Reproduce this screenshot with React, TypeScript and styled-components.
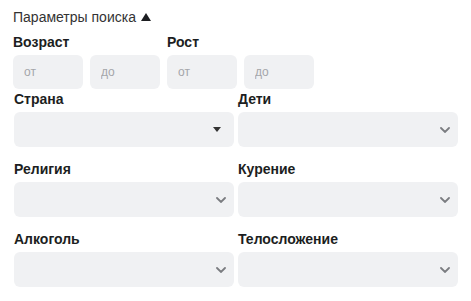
import * as React from 'react';
import styled, {createGlobalStyle} from 'styled-components';

const GlobalStyle = createGlobalStyle`
  body {
    margin: 0;
    background: #ffffff;
    font-family: "Liberation Sans", Arial, sans-serif;
  }
`;

const Page = styled.div`
  padding: 8px 13px 0 13px;
  width: 446px;
  box-sizing: border-box;
`;

const Toggle = styled.div`
  display: flex;
  align-items: center;
  gap: 5px;
  font-size: 14px;
  line-height: 18px;
  color: #333333;
`;

const UpTriangle = styled.span`
  width: 0;
  height: 0;
  border-left: 5px solid transparent;
  border-right: 5px solid transparent;
  border-bottom: 8px solid #1c1e21;
  margin-top: -1px;
`;

const RangeRow = styled.div`
  display: flex;
  gap: 7px;
  margin-top: 8px;
`;

const RangeGroup = styled.div`
  display: flex;
  flex-direction: column;
`;

const Label = styled.div`
  font-size: 14px;
  font-weight: 700;
  line-height: 17px;
  color: #1c1e21;
  margin-bottom: 4px;
`;

const RangeInputs = styled.div`
  display: flex;
  gap: 7px;
`;

const NumInput = styled.input`
  width: 70px;
  height: 34px;
  box-sizing: border-box;
  border: none;
  border-radius: 6px;
  background: #f0f1f3;
  padding: 0 11px;
  font-family: inherit;
  font-size: 12px;
  outline: none;
  &::placeholder {
    color: #a4a6aa;
  }
`;

const FieldGrid = styled.div`
  display: grid;
  grid-template-columns: 220px 220px;
  column-gap: 4px;
  row-gap: 14px;
  margin-top: 2px;
  padding-left: 1px;
`;

const Field = styled.div`
  display: flex;
  flex-direction: column;
`;

const SelectBox = styled.div`
  height: 35px;
  border-radius: 6px;
  background: #f0f1f3;
  display: flex;
  align-items: center;
  justify-content: flex-end;
  padding-right: 13px;
  box-sizing: border-box;
`;

const Caret = styled.span`
  width: 0;
  height: 0;
  border-left: 4px solid transparent;
  border-right: 4px solid transparent;
  border-top: 5px solid #333333;
`;

function Chevron() {
  return (
    <svg width="10" height="6" viewBox="0 0 10 6" style={{marginRight: -5}}>
      <path d="M1 1 L5 5 L9 1" fill="none" stroke="#7a7c80" strokeWidth="1.8" strokeLinecap="round"/>
    </svg>
  );
}

const fields: { label: string; kind: 'caret' | 'chevron' }[] = [
  {label: 'Страна', kind: 'caret'},
  {label: 'Дети', kind: 'chevron'},
  {label: 'Религия', kind: 'chevron'},
  {label: 'Курение', kind: 'chevron'},
  {label: 'Алкоголь', kind: 'chevron'},
  {label: 'Телосложение', kind: 'chevron'},
];

export default function App() {
  return (
    <Page>
      <GlobalStyle/>
      <Toggle>Параметры поиска <UpTriangle/></Toggle>
      <RangeRow>
        <RangeGroup>
          <Label>Возраст</Label>
          <RangeInputs>
            <NumInput placeholder="от"/>
            <NumInput placeholder="до"/>
          </RangeInputs>
        </RangeGroup>
        <RangeGroup>
          <Label>Рост</Label>
          <RangeInputs>
            <NumInput placeholder="от"/>
            <NumInput placeholder="до"/>
          </RangeInputs>
        </RangeGroup>
      </RangeRow>
      <FieldGrid>
        {fields.map(f => (
          <Field key={f.label}>
            <Label>{f.label}</Label>
            <SelectBox>{f.kind === 'caret' ? <Caret/> : <Chevron/>}</SelectBox>
          </Field>
        ))}
      </FieldGrid>
    </Page>
  );
}
